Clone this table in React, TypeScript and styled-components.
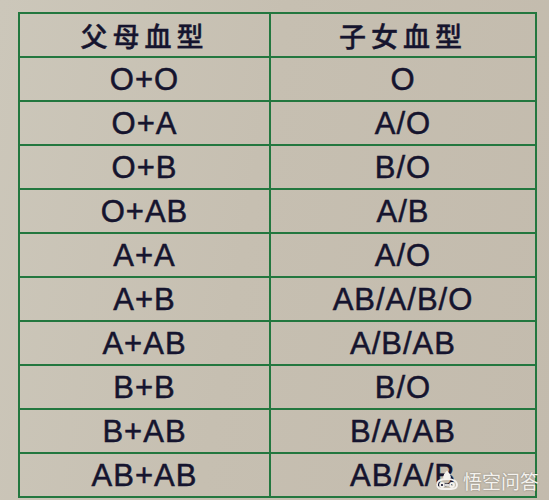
import React from 'react';
import styled, { createGlobalStyle } from 'styled-components';

const rows: [string, string][] = [
  ['O+O', 'O'],
  ['O+A', 'A/O'],
  ['O+B', 'B/O'],
  ['O+AB', 'A/B'],
  ['A+A', 'A/O'],
  ['A+B', 'AB/A/B/O'],
  ['A+AB', 'A/B/AB'],
  ['B+B', 'B/O'],
  ['B+AB', 'B/A/AB'],
  ['AB+AB', 'AB/A/B'],
];

const GlobalStyle = createGlobalStyle`
  html, body {
    margin: 0;
    padding: 0;
    background: #c9c4b6;
  }
`;

const Page = styled.div`
  position: relative;
  width: 549px;
  height: 500px;
  overflow: hidden;
  padding: 12px 12px 0 18px;
  box-sizing: border-box;
  background: linear-gradient(100deg, #ccc7ba 0%, #c6bfb1 45%, #c3bbad 100%);
`;

const Table = styled.table`
  width: 519px;
  border-collapse: collapse;
  table-layout: fixed;
  color: #15142e;
`;

const HeadCell = styled.th`
  height: 42px;
  border: 2px solid #23773f;
  padding: 0;
  font-family: 'Noto Sans CJK SC', sans-serif;
  font-size: 27px;
  font-weight: 500;
  letter-spacing: 5px;
  text-align: center;
  vertical-align: middle;
  line-height: 1;
  -webkit-text-stroke: 0.4px #15142e;
`;

const Cell = styled.td`
  height: 42px;
  border: 2px solid #23773f;
  padding: 0;
  font-family: 'Liberation Sans', Arial, sans-serif;
  font-size: 31px;
  letter-spacing: 1px;
  text-align: center;
  vertical-align: middle;
  line-height: 1;
  -webkit-text-stroke: 0.5px #15142e;
`;

const Watermark = styled.div`
  position: absolute;
  right: 10px;
  bottom: 6px;
  display: flex;
  align-items: center;
  gap: 3px;
  color: #f4f2ee;
  font-family: 'Noto Sans CJK SC', sans-serif;
  font-size: 19px;
  text-shadow: 0 0 2px rgba(0, 0, 0, 0.35);
`;

const Logo = () => (
  <svg width="26" height="22" viewBox="0 0 26 22" fill="none" stroke="#f4f2ee" strokeWidth="1.8">
    <path d="M13 2c-2 2-3 3-3 5 0 1 1 2 3 2s3-1 3-2c0-2-1-3-3-5z" fill="#f4f2ee" />
    <path d="M3 15c0-4 4-6 10-6s10 2 10 6c0 3-3 4-6 4H9c-3 0-6-1-6-4z" />
    <circle cx="8" cy="15" r="2" />
    <circle cx="18" cy="15" r="2" />
    <path d="M11 15h4" />
  </svg>
);

export default function App() {
  return (
    <Page>
      <GlobalStyle />
      <Table>
        <colgroup>
          <col style={{ width: 251 }} />
          <col />
        </colgroup>
        <thead>
          <tr>
            <HeadCell>父母血型</HeadCell>
            <HeadCell>子女血型</HeadCell>
          </tr>
        </thead>
        <tbody>
          {rows.map(([parents, child]) => (
            <tr key={parents}>
              <Cell>{parents}</Cell>
              <Cell>{child}</Cell>
            </tr>
          ))}
        </tbody>
      </Table>
      <Watermark>
        <Logo />
        悟空问答
      </Watermark>
    </Page>
  );
}
